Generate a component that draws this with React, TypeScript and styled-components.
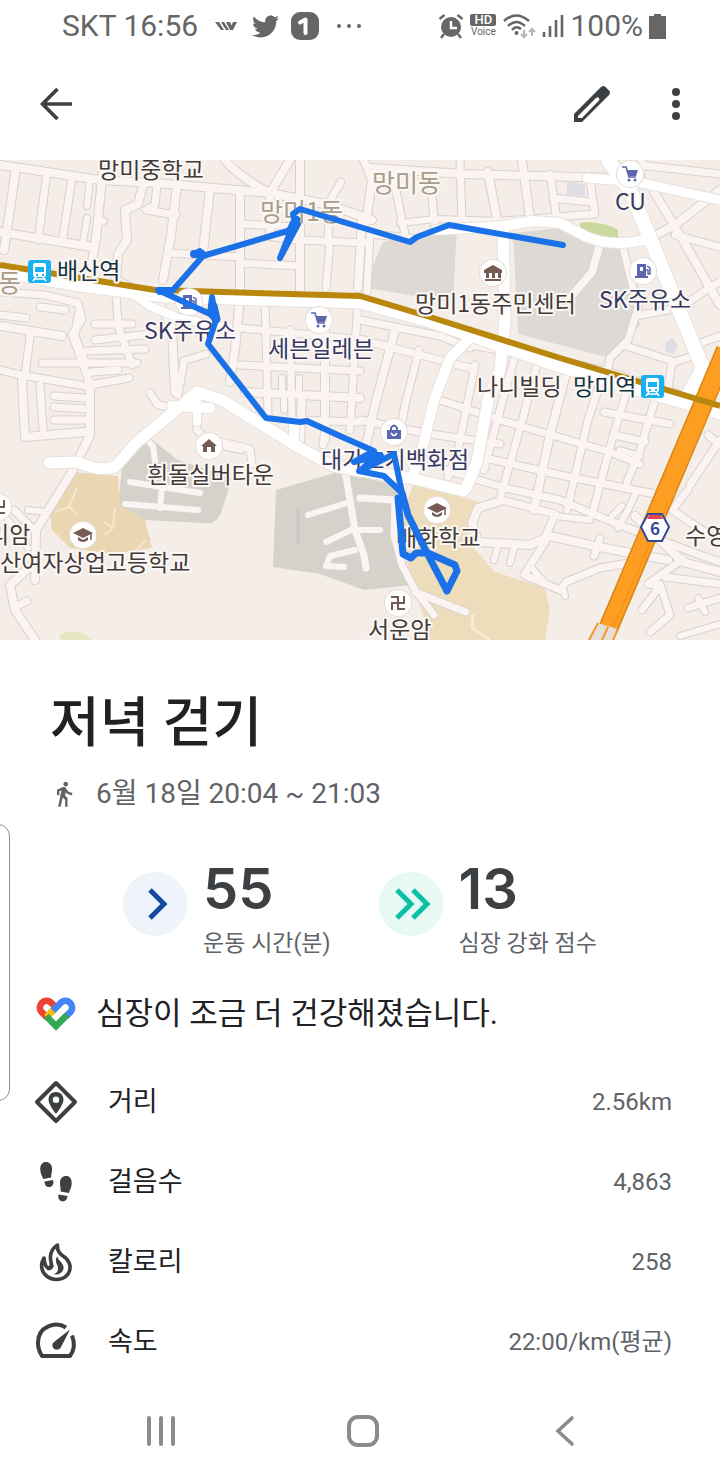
import React from "react";
import styled, { createGlobalStyle } from "styled-components";
import { FaTwitter } from "react-icons/fa";
import { MdDirectionsWalk } from "react-icons/md";

const GlobalStyle = createGlobalStyle`
  * { box-sizing: border-box; }
  body {
    margin: 0;
    background: #fff;
    color: #202124;
    font-family: Roboto, "Noto Sans CJK KR", sans-serif;
  }
`;

const Screen = styled.div`
  position: relative;
  min-height: 100vh;
  display: flex;
  flex-direction: column;
  overflow: hidden;
`;

const StatusBar = styled.div`
  display: flex;
  align-items: center;
  justify-content: space-between;
  height: 52px;
  padding: 0 54px 0 62px;
  color: #666;
  font-size: 30px;
  line-height: 52px;
`;

const StatusGroup = styled.div<{ $gap: number }>`
  display: flex;
  align-items: center;
  gap: ${(p) => p.$gap}px;
`;

const HdBadge = styled.span`
  display: flex;
  flex-direction: column;
  align-items: center;
  font-size: 10px;
  line-height: 12px;
  b {
    width: 26px;
    border-radius: 2px;
    background: #666;
    color: #fff;
    font-size: 13px;
    font-weight: 500;
    text-align: center;
  }
`;

const AppBar = styled.header`
  display: flex;
  align-items: center;
  height: 104px;
  padding: 0 20px 0 32px;
  margin-bottom: 4px;
`;

const IconButton = styled.button`
  display: flex;
  align-items: center;
  justify-content: center;
  width: 48px;
  height: 48px;
  padding: 0;
  border: 0;
  background: none;
  color: #3c4043;
`;

const Actions = styled.div`
  display: flex;
  gap: 36px;
  margin-left: auto;
`;

const MapFrame = styled.div`
  background: #f5ede7;
  svg { display: block; width: 100%; height: auto; }
`;

const MapText = styled.text<{ $tone?: "area" | "shop" | "station" }>`
  font-family: "Noto Sans CJK KR", sans-serif;
  font-size: ${(p) => (p.$tone === "area" ? 25 : 23)}px;
  fill: ${(p) =>
    p.$tone === "area" ? "#a89c8a" : p.$tone === "shop" ? "#353a63" : p.$tone === "station" ? "#14323f" : "#423a38"};
  stroke: #fbf7f4;
  stroke-width: 4px;
  stroke-linejoin: round;
  paint-order: stroke;
`;

const Summary = styled.section`
  padding: 40px 50px 0;
`;

const Title = styled.h1`
  margin: 0;
  font-size: 54px;
  line-height: 88px;
  font-weight: 500;
`;

const When = styled.p`
  display: flex;
  align-items: center;
  gap: 18px;
  margin: 4px 0 0;
  color: #5f6368;
  font-size: 28px;
  line-height: 44px;
`;

const Scores = styled.div`
  display: flex;
  justify-content: center;
  gap: 48px;
  padding-top: 42px;
`;

const Score = styled.div`
  display: flex;
  align-items: flex-start;
  gap: 16px;
`;

const ScoreDisc = styled.span<{ $tint: string }>`
  display: flex;
  width: 64px;
  height: 64px;
  margin-top: 14px;
  border-radius: 50%;
  background: ${(p) => p.$tint};
`;

const ScoreValue = styled.div`
  color: #3c4043;
  font-family: Inter, Roboto, sans-serif;
  font-size: 56px;
  line-height: 62px;
  font-weight: 600;
`;

const ScoreLabel = styled.div`
  margin-top: 8px;
  color: #5f6368;
  font-size: 23px;
  line-height: 32px;
`;

const Message = styled.p`
  display: flex;
  align-items: center;
  gap: 20px;
  margin: 30px 0 0;
  padding: 0 36px;
  font-size: 31px;
  line-height: 48px;
`;

const Details = styled.dl`
  margin: 24px 0 0;
  padding: 0 48px 0 32px;
`;

const DetailRow = styled.div`
  display: flex;
  align-items: center;
  height: 80px;
  line-height: 32px;
  svg { flex: none; margin-right: 28px; }
  dt { font-size: 27px; }
  dd { margin: 0 0 0 auto; color: #5f6368; font-size: 24px; }
`;

const NavBar = styled.nav`
  display: grid;
  grid-template-columns: repeat(3, 1fr);
  justify-items: center;
  align-items: center;
  height: 98px;
  padding: 0 54px 0 60px;
  margin-top: auto;
  button { color: #8b8b8b; }
`;

const EdgeHandle = styled.div`
  position: absolute;
  left: -16px;
  top: 824px;
  width: 26px;
  height: 277px;
  border: 1px solid #8f8f8f;
  border-radius: 12px;
`;

const minorRoads: [number, string][] = [
  [8, "M0 5L100 20L157 23L213 28L270 33L330 45L372 60"],
  [8, "M16 8L4 90"], [7, "M47 12L38 80"], [7, "M72 18L63 77"], [6, "M90 18L87 46"], [6, "M87 58L83 83"],
  [8, "M103 10L96 78L88 125"], [8, "M0 72L92 87"], [6, "M97 63L104 61"],
  [8, "M143 25L138 44L125 50L127 80L118 94L116 118"], [7, "M157 25L155 45L146 50L176 55"],
  [8, "M177 25L171 75L163 120"], [7, "M168 93L240 97"], [8, "M210 28L203 92"], [8, "M240 30V132"],
  [8, "M270 33V76L300 80"], [8, "M300 0V132"], [8, "M225 0Q240 18 270 33L290 0"], [7, "M240 64L300 67"],
  [7, "M240 103L300 106"], [7, "M300 80L366 83"], [7, "M328 44L341 22"], [7, "M330 45L328 82"],
  [8, "M362 60L358 128"], [7, "M330 82L326 128"],
  [7, "M0 132L45 135L78 143L82 160L72 174L88 218L90 238"], [7, "M40 147L65 150"], [7, "M0 155L26 158"],
  [8, "M0 166L62 176"], [7, "M30 176L25 216L0 210"], [7, "M27 216L85 226L129 218"], [7, "M116 134L118 165L132 205"],
  [7, "M78 155L75 176L85 202"], [7, "M95 180L152 174"], [7, "M86 191L145 189"], [7, "M42 203H137"], [7, "M95 164H132"],
  [7, "M92 212L118 210"], [8, "M22 220L25 277L85 272"], [7, "M40 225L43 270"], [7, "M54 236L84 238"], [7, "M54 247L86 249"], [7, "M54 260L84 260"],
  [8, "M90 222V275L73 310L36 370L35 420"], [7, "M36 372L14 350"], [6, "M48 352L28 350"], [6, "M28 388L8 360"],
  [8, "M35 402L10 425L15 450L35 480"], [7, "M15 447L27 441"], [8, "M116 120L160 144L172 168L175 232"],
  [7, "M150 233L158 245L170 247"], [7, "M178 235L184 201L206 194"], [7, "M198 245L197 270L205 278L250 289L252 304"],
  [6, "M226 287L241 290"], [6, "M147 280L153 286L155 301"],
  [8, "M240 138L235 190L230 222"], [7, "M240 168L365 180"], [7, "M265 138L268 257"], [7, "M290 170L292 260"], [8, "M325 138L325 280"],
  [7, "M240 205L360 211"], [6, "M282 218V230"], [6, "M299 218V230"], [8, "M245 232L360 238"], [7, "M300 260L360 262"], [6, "M284 250V240"], [7, "M358 140L350 270"],
  [8, "M300 284L302 235"], [7, "M323 285L326 260"],
  [8, "M364 0L372 20L366 62"], [8, "M372 8L463 14L620 18"], [7, "M393 16L405 74"], [7, "M430 12L435 71"],
  [7, "M460 0L462 62"], [8, "M488 12L498 65"], [8, "M522 0L530 58"], [7, "M550 14L557 60"], [7, "M590 20L595 54L504 61"],
  [6, "M400 63L435 59L500 61"], [7, "M553 38L590 42"], [7, "M367 132L370 74L410 78"], [8, "M600 84L592 112L570 138"],
  [7, "M622 83L638 148L628 180L610 198L608 208"], [7, "M636 156L678 148"], [8, "M650 78L675 65L720 30"],
  [8, "M654 32L683 80L710 128L720 145"], [7, "M675 75L720 87"], [7, "M680 148L712 126L720 122"], [7, "M626 186L675 202L698 194"],
  [7, "M672 203L668 228"], [7, "M703 182L720 176"], [7, "M640 22L642 0"], [7, "M640 5L720 14"],
  [7, "M360 160L440 176L470 188"], [8, "M395 170L375 245L365 290"], [7, "M419 190L405 245L398 282"], [7, "M374 183L470 208"],
  [7, "M470 185L547 198L610 212L690 238"], [7, "M475 205L458 290L448 317"], [7, "M515 196L500 250L484 310"], [7, "M538 200L523 258L500 338"],
  [8, "M568 206L550 275L534 350"], [7, "M604 212L588 260L567 350"], [7, "M630 220L612 280L592 355"], [7, "M658 230L640 290L627 322"],
  [7, "M360 260L430 274L500 284"], [7, "M440 240L500 260L610 292L640 304"], [7, "M485 298L560 315L655 334"], [7, "M446 310L505 328L560 340L620 365L700 395L720 402"],
  [7, "M604 252L670 264"], [7, "M615 275L645 282"], [6, "M620 290L640 296"], [6, "M600 325L594 345"], [6, "M635 335L628 350L618 368"],
  [8, "M500 341L478 348L472 363L478 382L530 385L550 376L590 385L640 395L668 400"], [7, "M502 340L555 354L543 382"], [6, "M555 356L590 360"],
  [6, "M498 385L494 400"], [6, "M514 388L510 403"], [7, "M545 382L524 415L560 430L566 422L600 408L635 402"], [6, "M563 428L565 436"],
  [6, "M530 406L544 422"], [7, "M600 378L594 396"], [6, "M612 356L622 346"], [7, "M688 330L672 350L720 382"], [7, "M720 280L690 325"], [7, "M708 275L720 285"],
  [8, "M635 356L683 402L720 412"], [7, "M683 399L648 424L660 426L642 450"], [7, "M660 424L670 455L650 472"], [7, "M688 448L720 438"], [7, "M665 417L720 424"],
  [6, "M720 464L680 476"], [6, "M698 438L705 452"], [6, "M308 355L350 342"], [6, "M326 382L355 368"], [6, "M344 407L326 406L330 396L355 390"],
  [7, "M345 310L355 370L364 395L366 408"], [6, "M130 322L200 333"], [6, "M125 344L198 350"], [6, "M162 328L160 348"],
  [7, "M360 338L395 340L394 375L402 405L415 430L434 455"], [7, "M415 432L466 452"], [6, "M360 370L380 370"],
];

const mainRoads: [number, string][] = [
  [11, "M0 112L80 126L165 137L360 143L430 162L560 207L720 254"],
  [8, "M120 125L150 146L178 158L228 168"],
  [11, "M49 303L77 302Q102 313 116 306L135 284L177 249L197 232L222 240L300 288L333 306L360 311L410 318L463 331"],
  [10, "M172 246L210 248"],
  [11, "M503 68L505 162L500 210L488 240L477 302L466 328"],
  [10, "M470 178L450 198L434 240L424 282L412 318"],
  [10, "M436 70L503 66L533 61L560 63L587 77Q613 88 648 79"],
  [14, "M608 0L630 30L650 78L677 145L703 208L690 232"],
  [9, "M587 18L637 22L720 40"],
  [10, "M294 262V286"],
  [8, "M197 238V262"],
];

const Roads = ({ list, casing, fill }: { list: [number, string][]; casing: string; fill: string }) => (
  <g fill="none" strokeLinecap="round" strokeLinejoin="round">
    {list.map(([w, d]) => <path key={d} d={d} stroke={casing} strokeWidth={w + 2} />)}
    {list.map(([w, d]) => <path key={d} d={d} stroke={fill} strokeWidth={w} />)}
  </g>
);

const Poi = ({ x, y, color, children }: { x: number; y: number; color: string; children: React.ReactNode }) => (
  <g transform={`translate(${x} ${y})`} fill={color} stroke="none">
    <circle r="14" fill="#e5dfda" />
    <circle r="13" fill="#fff" />
    {children}
  </g>
);

const Cart = () => (
  <>
    <path d="M-8-7h4l3 10H6" fill="none" stroke="#5c66ad" strokeWidth="1.6" />
    <path d="M-3-4H8L6 2h-7z" />
    <circle cx="-1" cy="6" r="1.5" /><circle cx="5" cy="6" r="1.5" />
  </>
);
const Fuel = () => (
  <>
    <path fillRule="evenodd" d="M-6-7H3V5H5V7H-8V5H-6zM-3-4V0H0V-4z" />
    <path d="M4-5l3 2v6H5V-1H3" fill="none" stroke="#5c66ad" strokeWidth="1.5" />
  </>
);
const Cap = () => (
  <>
    <path d="M-10-2L0-7L10-2L0 3zM-5 2L0 5L5 2V5Q0 9-5 5z" />
    <path d="M8-2V5" stroke="#765b54" strokeWidth="1.5" />
  </>
);
const Temple = () => (
  <path d="M0-7V7M-7 0H7M6 0V-7M0-6H-7M-6 0V7M0 6H7" fill="none" stroke="#765b54" strokeWidth="2" />
);

const Train = ({ x, y }: { x: number; y: number }) => (
  <g transform={`translate(${x} ${y})`}>
    <rect x="-11" y="-11" width="23" height="23" rx="3" fill="#1bb1f1" />
    <path fillRule="evenodd" fill="#fff" d="M-4-8H5Q7-8 7-5V4Q7 6 5 6H-4Q-6 6-6 4V-5Q-6-8-4-8zM-4-4V1H5V-4zM-3 3V5H-1V3zM3 3V5H5V3z" />
    <path d="M-3 6L-6 10M4 6L7 10M-4 8H5" stroke="#fff" strokeWidth="1.5" />
  </g>
);

const RouteMap = () => (
  <MapFrame>
    <svg viewBox="0 0 720 480" role="img" aria-label="걷기 경로 지도">
      <g>
        <path fill="#dddad6" d="M383 82L457 68L453 142L367 128L372 108zM513 73L560 68L590 82L622 88L640 165L610 198L518 174z" />
        <path fill="#d5d2cc" d="M150 278L178 300L232 318L222 350Q217 366 203 363L145 360L118 345L122 308zM276 330L345 310L365 318L398 325L396 395L412 425L364 430L320 414L273 407z" />
        <path fill="#ebd6b2" d="M72 312L118 316L120 345L145 360L152 388L112 394L70 388L52 370L50 355z" />
        <path fill="#eeddbb" d="M414 322L478 342L466 380L495 412L545 428L550 450L545 480H430L398 370z" />
        <path fill="#c9d89c" d="M580 63Q600 60 618 70V78H605L580 70z" />
        <path fill="#dedce4" d="M567 22L585 24V36L567 35zM665 183l8-5 5 8-5 8-8-3z" />
        <path fill="#e6e6c2" d="M60 475Q78 466 92 480H60z" />
        <path d="M77 328L69 347L55 352M69 347L78 355M115 348L113 368L105 375M113 368L104 362M146 380L136 390" stroke="#f4e6cf" strokeWidth="2" fill="none" />
        <path d="M473 454L472 468L490 480" stroke="#f7ecd6" strokeWidth="3" fill="none" />
        <path d="M298 350V385" stroke="#c8c7c2" strokeWidth="3" />
      </g>
      <Roads list={minorRoads} casing="#d8d2cc" fill="#fbf4f3" />
      <Roads list={mainRoads} casing="#e8e2de" fill="#fff" />
      <path d="M726 190L608 469" stroke="#d88718" strokeWidth="20" fill="none" />
      <path d="M726 190L608 469" stroke="#fd9e22" strokeWidth="17" fill="none" />
      <path d="M0 105L80 118L155 130L190 131L360 136L430 157L560 198L720 246" fill="none" stroke="#b8870b" strokeWidth="6" />
      <path d="M668 342L612 470" stroke="#ec9018" strokeWidth="1" />
      <path d="M598 463L588 480H612L617 469z" fill="#e4dfd9" />
      <path d="M598 463L589 480M608 467L602 480M618 469L613 480" stroke="#f39a26" strokeWidth="2" />

      <Poi x={630} y={14} color="#5c66ad"><Cart /></Poi>
      <Poi x={319} y={160} color="#5c66ad"><Cart /></Poi>
      <Poi x={643} y={111} color="#5c66ad"><Fuel /></Poi>
      <Poi x={189} y={142} color="#5c66ad"><Fuel /></Poi>
      <Poi x={493} y={113} color="#765b54">
        <path d="M-9-3L0-8L9-3V0H-9zM-7 0H-4V5H-7zM-1 0H2V5H-1zM5 0H8V5H5zM-8 6H8V8H-8z" />
      </Poi>
      <Poi x={209} y={286} color="#765b54"><path d="M-8 0L0-7L8 0H6V6H2V1H-2V6H-6V0z" /></Poi>
      <Poi x={83} y={375} color="#765b54"><Cap /></Poi>
      <Poi x={437} y={350} color="#765b54"><Cap /></Poi>
      <Poi x={394} y={272} color="#5c66ad">
        <path d="M-7-2H7V7H-7z" />
        <path d="M-3-2V-4Q0-9 3-4V-2" fill="none" stroke="#5c66ad" strokeWidth="2" />
        <path d="M-3 1Q0 6 3 1" fill="none" stroke="#fff" strokeWidth="1.5" />
      </Poi>
      <Poi x={398} y={443} color="#765b54"><Temple /></Poi>
      <Poi x={-2} y={347} color="#765b54"><Temple /></Poi>
      <Train x={39} y={111} />
      <Train x={652} y={226} />

      <MapText x="98" y="18">망미중학교</MapText>
      <MapText x="372" y="32" $tone="area">망미동</MapText>
      <MapText x="260" y="61" $tone="area">망미1동</MapText>
      <MapText x="-2" y="132" $tone="area">동</MapText>
      <MapText x="57" y="119" $tone="station">배산역</MapText>
      <MapText x="144" y="179" $tone="shop">SK주유소</MapText>
      <MapText x="268" y="197" $tone="shop">세븐일레븐</MapText>
      <MapText x="615" y="50" $tone="shop">CU</MapText>
      <MapText x="599" y="148" $tone="shop">SK주유소</MapText>
      <MapText x="415" y="152">망미1동주민센터</MapText>
      <MapText x="477" y="235">나니빌딩</MapText>
      <MapText x="573" y="235" $tone="station">망미역</MapText>
      <MapText x="147" y="323">흰돌실버타운</MapText>
      <MapText x="321" y="308" $tone="shop">대가호기백화점</MapText>
      <MapText x="396" y="386">배화학교</MapText>
      <MapText x="-12" y="383">리암</MapText>
      <MapText x="0" y="411">산여자상업고등학교</MapText>
      <MapText x="368" y="478">서운암</MapText>
      <MapText x="685" y="384">수영</MapText>

      <path d="M648 354H662L669 367L662 381H648L641 367z" fill="#fff" stroke="#34489a" strokeWidth="2" />
      <path d="M649 355H661L663 359H647z" fill="#e2474b" />
      <text x="655" y="375" textAnchor="middle" fontFamily="Noto Sans CJK KR, sans-serif" fontWeight="700" fontSize="17" fill="#34489a">6</text>

      <g fill="none" stroke="#1b72e8" strokeWidth="6" strokeLinecap="round" strokeLinejoin="round">
        <path d="M563 85L449 65L417 77L410 82L300 49L293 54L295 61L298 64L280 98L291 70L203 96L194 94L200 91L203 96L173 130H158L210 154L216 160L212 137L210 154" />
        <path d="M296 60L291 70" strokeWidth="9" />
        <path d="M194 94H202" strokeWidth="8" />
        <path d="M160 131H170" strokeWidth="8" />
        <path d="M216 160L208 184L266 258L300 262L307 261L340 276L374 291L354 302L376 296L360 311L394 294L402 333" />
        <path d="M359 311L384 316L401 332" />
        <path d="M213 146L216 159" strokeWidth="9" />
        <path d="M402 333L408 355L427 393L447 431L457 411L455 405L428 393H416L411 398L403 394L398 338" strokeWidth="7" />
        <path d="M366 299L380 296" strokeWidth="8" />
      </g>
    </svg>
  </MapFrame>
);

const HeartIcon = () => (
  <svg width="40" height="34" viewBox="0 0 40 34" fill="none" strokeWidth="6.6">
    <path stroke="#ea4335" d="M11 20.4L5.3 14.7A6.7 6.7 0 0 1 14.7 5.3L22 12.6" />
    <path stroke="#4285f4" d="M30 19.4L34.7 14.7A6.7 6.7 0 0 0 25.3 5.3L15 15.6" />
    <path stroke="#fbbc04" d="M17 13.6L10.4 20.2" />
    <path stroke="#34a853" d="M10.2 19.2L20 29L31 18" />
  </svg>
);

const DistanceIcon = () => (
  <svg width="48" height="48" viewBox="0 0 48 48">
    <path d="M24 5L43 24L24 43L5 24z" fill="none" stroke="#3c4043" strokeWidth="4" strokeLinejoin="round" />
    <path fillRule="evenodd" fill="#3c4043" d="M24 14C19.500 14 16.500 17 16.500 21.500C16.500 27 24 36 24 36S31.500 27 31.500 21.500C31.500 17 28.500 14 24 14zM24 18.500A3.200 3.200 0 1 1 24 25A3.200 3.200 0 1 1 24 18.500z" />
  </svg>
);

const StepsIcon = () => (
  <svg width="48" height="48" viewBox="0 0 48 48" fill="#3c4043">
    <path d="M13 4C9.500 4.500 8 8 8.300 12C8.600 15.500 10 18 11.200 21L19.200 19.500C19 16 20.300 13.500 20 10C19.700 6 17 3.500 13 4z" />
    <path d="M12.500 23.500L21 22C22 25 21 28.500 18 29C14.500 29.600 12.700 27.500 12.500 23.500z" />
    <path d="M35 18C38.500 18.500 40 22 39.700 26C39.400 29.500 38 32 36.800 35L28.600 33.500C29 30 27.700 27.500 28 24C28.300 20 31 17.500 35 18z" />
    <path d="M26.500 36.500L35.500 38C35.300 42 33 43.800 30 43.300C27 42.800 25.800 40 26.500 36.500z" />
  </svg>
);

const CalorieIcon = () => (
  <svg width="48" height="48" viewBox="0 0 48 48">
    <path fill="none" stroke="#3c4043" strokeWidth="3.600" strokeLinejoin="round" d="M25.500 7C20 10.500 18 16 18.500 21C19 25.500 20.500 28 18 29.500C14.500 31 12.500 27 12 20C8.500 26 9.500 32 12.500 36C19 43.500 31 43 36 36C41 28 36 21 31 18C26.500 15 25 12 25.500 7z" />
    <path fill="#3c4043" d="M25.500 18C25 22 31 24 31.500 29C32 34 27 37.500 22 36.300C25 34.800 26.500 32.500 26 29.500C25.300 26 22 23 25.500 18z" />
    <path fill="none" stroke="#3c4043" strokeWidth="2" d="M21 27Q20 32 15 31" />
  </svg>
);

const SpeedIcon = () => (
  <svg width="48" height="48" viewBox="0 0 48 48">
    <path fill="none" stroke="#3c4043" strokeWidth="4" strokeLinejoin="round" d="M34 9.500C24 3 6 8 6 25C6 30 7.500 34 10 38H38C42.500 32 43 25 40 17.500" />
    <path fill="#3c4043" d="M38 11.500L28.500 30C26.500 32.500 22.500 32.200 21 29.500C19.700 27 20.500 25 22 24z" />
  </svg>
);

const details = [
  { label: "거리", value: "2.56km", Icon: DistanceIcon },
  { label: "걸음수", value: "4,863", Icon: StepsIcon },
  { label: "칼로리", value: "258", Icon: CalorieIcon },
  { label: "속도", value: "22:00/km(평균)", Icon: SpeedIcon },
];

export default function App() {
  return (
    <Screen>
      <GlobalStyle />
      <StatusBar>
        <StatusGroup $gap={12}>
          <span>SKT 16:56</span>
          <svg width="30" height="14" viewBox="0 0 30 14" fill="#666">
            <path d="M5 3H9L14 11H11zM11 3H14L19 11H16zM16 3H20L22 7L20 11zM23 3H27L23 11H20z" />
          </svg>
          <FaTwitter size={27} />
          <svg width="28" height="28" viewBox="0 0 28 28">
            <rect width="28" height="28" rx="9" fill="#666" />
            <path d="M9 10.500L14.500 7.500V21" fill="none" stroke="#fff" strokeWidth="4" strokeLinecap="round" strokeLinejoin="round" />
          </svg>
          <svg width="44" height="6" viewBox="0 0 44 6" fill="#666">
            <circle cx="8" cy="3" r="2" /><circle cx="18" cy="3" r="2" /><circle cx="28" cy="3" r="2" />
          </svg>
        </StatusGroup>
        <StatusGroup $gap={6}>
          <svg width="26" height="26" viewBox="0 0 26 26" fill="none" stroke="#666" strokeWidth="2.400">
            <circle cx="13" cy="14" r="10" fill="#666" stroke="none" />
            <path d="M1.500 6L6.500 2M24.500 6L19.500 2M6 21L3 25M20 21L23 25" />
            <path d="M13 8V15H19" stroke="#fff" />
          </svg>
          <HdBadge><b>HD</b>Voice</HdBadge>
          <svg width="34" height="26" viewBox="0 0 34 26" fill="none" stroke="#666" strokeWidth="2.400">
            <path d="M2 8Q14-3 27 8M6 13Q14 5 23 13M10 17Q14 12 19 16" />
            <circle cx="14.500" cy="20" r="2" fill="#666" stroke="none" />
            <path d="M22 17V24M19 21L22 24L25 21M30 23V16M27 19L30 16L33 19" stroke="#b5b5b5" strokeWidth="2" />
          </svg>
          <svg width="22" height="24" viewBox="0 0 22 24" stroke="#666" strokeWidth="2.600">
            <path d="M2 18V23M8 12V23M14 6V23M20 1V23" />
          </svg>
          <span>100%</span>
          <svg width="17" height="25" viewBox="0 0 17 25" fill="#666"><path d="M5 0H12V2H17V25H0V2H5z" /></svg>
        </StatusGroup>
      </StatusBar>
      <AppBar>
        <IconButton aria-label="뒤로">
          <svg width="48" height="48" viewBox="0 0 48 48" fill="none" stroke="currentColor" strokeWidth="3.600">
            <path d="M40 24H11M25.500 9L10.500 24L25.500 39" />
          </svg>
        </IconButton>
        <Actions>
          <IconButton aria-label="수정">
            <svg width="48" height="48" viewBox="0 0 48 48" fill="currentColor">
              <path fillRule="evenodd" d="M6 34V42H14L41 15Q43 12.500 41 10.500L37.500 7Q35.500 5 33 7zM10 36L28 18Q31 16 31.500 20L14 38H10z" />
            </svg>
          </IconButton>
          <IconButton aria-label="더보기">
            <svg width="48" height="48" viewBox="0 0 48 48" fill="currentColor">
              <circle cx="24" cy="12" r="4" /><circle cx="24" cy="24" r="4" /><circle cx="24" cy="36" r="4" />
            </svg>
          </IconButton>
        </Actions>
      </AppBar>
      <RouteMap />
      <main>
        <Summary>
          <Title>저녁 걷기</Title>
          <When><MdDirectionsWalk size={28} />6월 18일 20:04 ~ 21:03</When>
        </Summary>
        <Scores>
          <Score>
            <ScoreDisc $tint="#eff3fa">
              <svg width="64" height="64" viewBox="0 0 64 64" fill="none" stroke="#1148a0" strokeWidth="5">
                <path d="M27 18L41 32L27 46" />
              </svg>
            </ScoreDisc>
            <div>
              <ScoreValue>55</ScoreValue>
              <ScoreLabel>운동 시간(분)</ScoreLabel>
            </div>
          </Score>
          <Score>
            <ScoreDisc $tint="#e6f9f5">
              <svg width="64" height="64" viewBox="0 0 64 64" fill="none" stroke="#0abfa5" strokeWidth="5">
                <path d="M18 18L32 32L18 46M34 18L48 32L34 46" />
              </svg>
            </ScoreDisc>
            <div>
              <ScoreValue>13</ScoreValue>
              <ScoreLabel>심장 강화 점수</ScoreLabel>
            </div>
          </Score>
        </Scores>
        <Message><HeartIcon />심장이 조금 더 건강해졌습니다.</Message>
        <Details>
          {details.map(({ label, value, Icon }) => (
            <DetailRow key={label}>
              <Icon />
              <dt>{label}</dt>
              <dd>{value}</dd>
            </DetailRow>
          ))}
        </Details>
      </main>
      <NavBar>
        <IconButton aria-label="최근 앱">
          <svg width="48" height="48" viewBox="0 0 48 48" stroke="currentColor" strokeWidth="4" strokeLinecap="round"><path d="M12 11V37M24 11V37M36 11V37" /></svg>
        </IconButton>
        <IconButton aria-label="홈">
          <svg width="48" height="48" viewBox="0 0 48 48" fill="none" stroke="currentColor" strokeWidth="4"><rect x="10" y="10" width="28" height="28" rx="9" /></svg>
        </IconButton>
        <IconButton aria-label="이전">
          <svg width="48" height="48" viewBox="0 0 48 48" fill="none" stroke="currentColor" strokeWidth="3.600" strokeLinecap="round"><path d="M31 11L17 24L31 37" /></svg>
        </IconButton>
      </NavBar>
      <EdgeHandle />
    </Screen>
  );
}
